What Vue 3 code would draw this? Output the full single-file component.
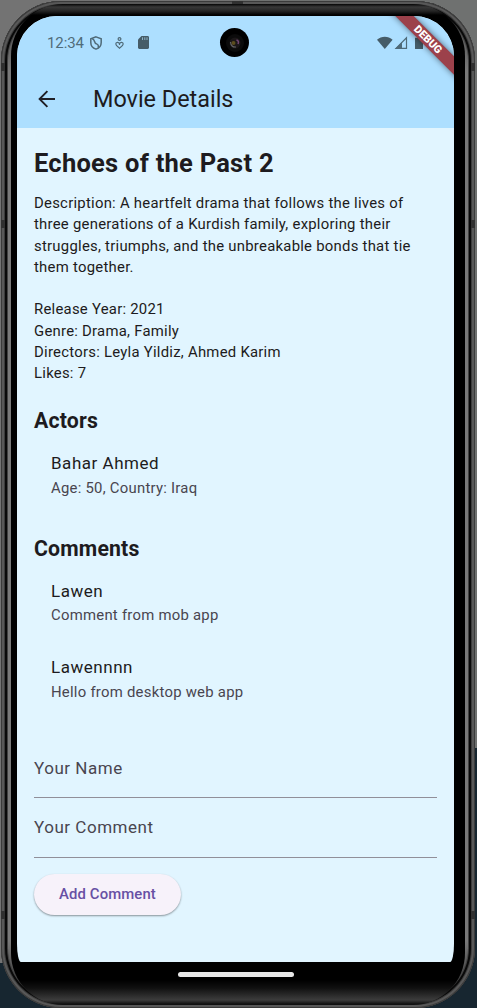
<script setup>
const details = [
  'Release Year: 2021',
  'Genre: Drama, Family',
  'Directors: Leyla Yildiz, Ahmed Karim',
  'Likes: 7',
]
const actors = [{ name: 'Bahar Ahmed', info: 'Age: 50, Country: Iraq' }]
const comments = [
  { name: 'Lawen', text: 'Comment from mob app' },
  { name: 'Lawennnn', text: 'Hello from desktop web app' },
]
const fields = ['Your Name', 'Your Comment']
</script>

<template>
  <div class="desk">
    <div class="phone">
      <i class="seam seam-top"></i>
      <i class="seam left a"></i><i class="seam left b"></i><i class="seam left c"></i>
      <i class="seam right a"></i><i class="seam right b"></i><i class="seam right c"></i>
      <div class="glass">
        <div class="screen">
          <header class="top">
            <div class="status">
              <span class="clock">12:34</span>
              <svg class="shield" width="12" height="14" viewBox="0 0 12 14" fill="none" stroke="#4f6a78" stroke-width="1.5">
                <path d="M6 .9 11.2 2.8V6.5C11.2 9.8 9 12.2 6 13.1 3 12.2.8 9.8.8 6.5V2.8Z" />
                <path d="M2 2.8C5.5 3.2 3.4 6.8 6.5 7.9 9 8.8 8.4 11 8 11.7" />
              </svg>
              <svg class="person" width="9" height="12" viewBox="0 0 9 12" fill="none" stroke="#4f6a78" stroke-width="1.2">
                <circle cx="4.5" cy="2" r="1.4" />
                <path d="M4.5 6.6C3.5 4.8.8 5 .8 7 .8 8.7 3 10 4.5 11.2 6 10 8.2 8.7 8.2 7 8.2 5 5.5 4.8 4.5 6.6L4.5 8" />
              </svg>
              <svg class="card" width="11" height="13" viewBox="0 0 11 13">
                <path fill="#455c68" d="M3.5 0H9.6C10.4 0 11 .6 11 1.4V11.6C11 12.4 10.4 13 9.6 13H1.4C.6 13 0 12.4 0 11.6V3.5Z" />
                <path stroke="#8fb4c9" stroke-width="1" d="M4.5 1.3V4M6.8 1.3V4M9 1.3V4" />
              </svg>
              <svg class="signals" width="48" height="14" viewBox="0 0 48 14">
                <path fill="#455c68" d="M0 3.7C4.3-.2 11.3-.2 15.6 3.7L7.8 13Z" />
                <path fill="none" stroke="#4f6a78" stroke-width="1.2" d="M19 12.4 29.5 1.8V12.4Z" />
                <path fill="#4f6a78" d="M18 13 25 6V13Z" />
                <path fill="#455c68" d="M38 1.8H40V.4H43.8V1.8H46V13H38Z" />
              </svg>
            </div>
            <div class="appbar">
              <svg width="18" height="18" viewBox="0 0 18 18" fill="none" stroke="#202027" stroke-width="1.9">
                <path d="M17 9H2M9.4 1.2 1.6 9 9.4 16.8" />
              </svg>
              <h1>Movie Details</h1>
            </div>
          </header>
          <div class="camera"><svg width="28" height="28" viewBox="0 0 28 28">
            <circle cx="14" cy="14" r="9" fill="#0b0b0b" />
            <circle cx="14" cy="14" r="5.5" fill="#1b1718" />
            <path d="M9.5 13Q10 18.5 15 18" fill="none" stroke="#66666a" stroke-width="1.1" />
            <circle cx="12.5" cy="14" r="2" fill="#5b4d1e" />
            <path d="M15.5 11Q18.5 12 17 15" fill="none" stroke="#714574" stroke-width="1.5" />
          </svg></div>
          <div class="ribbon">DEBUG</div>
          <main>
            <h2 class="title">Echoes of the Past 2</h2>
            <p class="body">Description: A heartfelt drama that follows the lives of<br>three generations of a Kurdish family, exploring their<br>struggles, triumphs, and the unbreakable bonds that tie<br>them together.</p>
            <div class="body facts"><div v-for="d in details" :key="d">{{ d }}</div></div>
            <h3>Actors</h3>
            <div v-for="a in actors" :key="a.name" class="tile">
              <div class="name">{{ a.name }}</div><div class="sub">{{ a.info }}</div>
            </div>
            <h3 class="second">Comments</h3>
            <div v-for="c in comments" :key="c.name" class="tile">
              <div class="name">{{ c.name }}</div><div class="sub">{{ c.text }}</div>
            </div>
            <form @submit.prevent>
              <div v-for="f in fields" :key="f" class="field">{{ f }}</div>
              <button>Add Comment</button>
            </form>
          </main>
        </div>
        <div class="nav"><span></span></div>
      </div>
    </div>
  </div>
</template>

<style>
body { margin: 0; overflow: hidden; }
</style>
<style scoped>
* { box-sizing: border-box; }
.desk {
  width: 477px; height: 1008px; overflow: hidden; padding: 1px 2px 0 1px;
  font-family: Roboto, "Liberation Sans", sans-serif; color: #1d1b20;
  background:
    linear-gradient(#6f7170 0 748px, #172630 748px) right / 238px 100% no-repeat,
    linear-gradient(#737373 0 963px, #172630 963px);
}
.phone {
  position: relative; height: 1007px; border-radius: 60px; padding: 3px 10px;
  background: linear-gradient(#222 0, #555 30px, #797979 70px, #797979 940px, #555 965px, #222 1000px);
  box-shadow: inset 0 0 0 1px #3b3b3b, inset 0 0 0 3px #585858, inset 0 0 0 4px #3c3c3c, inset 0 0 0 6px #090909, inset 0 0 0 7px #414141;
}
.glass {
  height: 1001px; border-radius: 52px; padding: 12px 11px 0 6px;
  background: linear-gradient(#050505 0, #383838 3px, #252525 7px, #000 11px, #000 976px, #101010 984px, #3c3c3c 996px, #111 1000px);
}
.seam { position: absolute; background: #303030; }
.seam-top { left: 231px; top: 0; width: 11px; height: 3px; }
.left { left: 0; width: 4px; height: 8px; }
.right { right: 0; width: 4px; height: 8px; }
.a { top: 62px; } .b { top: 219px; } .c { top: 910px; }
.screen {
  position: relative; width: 437px; height: 946px; overflow: hidden;
  border-radius: 40px 40px 4px 4px / 40px 40px 18px 18px; background: #e1f5ff;
}
.top { height: 112px; background: #addfff; }
.status { height: 52px; padding: 1px 0 0 30px; display: flex; align-items: center; }
.clock { font-size: 15px; line-height: 18px; width: 38px; color: #506c7a; letter-spacing: -.1px; white-space: nowrap; }
.shield { margin-left: 5px; }
.person { margin-left: 13px; }
.card { margin-left: 14px; }
.signals { margin-left: 228px; }
.appbar { height: 62px; display: flex; align-items: center; padding: 0 0 0 21px; }
h1 { margin: 0 0 0 37px; font-size: 23.4px; line-height: 30px; font-weight: 400; }
.camera { position: absolute; left: 203px; top: 12px; width: 29px; height: 29px; border-radius: 50%; background: #000; display: grid; place-items: center; }
.ribbon {
  position: absolute; left: 359px; top: 17px; width: 104px; height: 13px; transform: rotate(45deg);
  background: #9c414b; color: #fff; font-size: 10.8px; font-weight: 900; line-height: 13px;
  text-align: center; box-shadow: 0 0 6px #0008;
}
main { padding: 21px 17px 0; }
.title { margin: 0; font-size: 25.5px; line-height: 29px; font-weight: 700; letter-spacing: .25px; white-space: nowrap; }
.body { margin: 15px 0 0; font-size: 14.88px; line-height: 21.27px; letter-spacing: .255px; white-space: nowrap; }
.facts { margin-top: 21.3px; }
h3 { margin: 22px 0 0; font-size: 21.26px; line-height: 29px; font-weight: 700; letter-spacing: .17px; }
.tile { height: 76.5px; padding: 16px 17px 0; white-space: nowrap; }
.name { font-size: 17px; line-height: 25.5px; letter-spacing: .53px; }
.sub { font-size: 14.88px; line-height: 22px; letter-spacing: .25px; color: #49454f; }
h3.second { margin-top: 22px; }
form { padding-top: 23px; }
.field { height: 59.5px; padding-top: 17px; font-size: 17px; line-height: 25.5px; letter-spacing: .53px; color: #49454f; border-bottom: 1px solid #918f99; }
button {
  display: block; margin-top: 16px; width: 147px; height: 41px; padding: 0; border: 0; border-radius: 21px;
  background: #f7f2fa; color: #6750a4; font-family: inherit; font-size: 14.88px; font-weight: 500; letter-spacing: .106px;
  box-shadow: 0 1px 2px #0006;
}
.nav { height: 26px; width: 437px; display: flex; justify-content: center; padding-top: 10px; }
.nav span { width: 116px; height: 5px; border-radius: 3px; background: #e7e7e7; }
</style>
